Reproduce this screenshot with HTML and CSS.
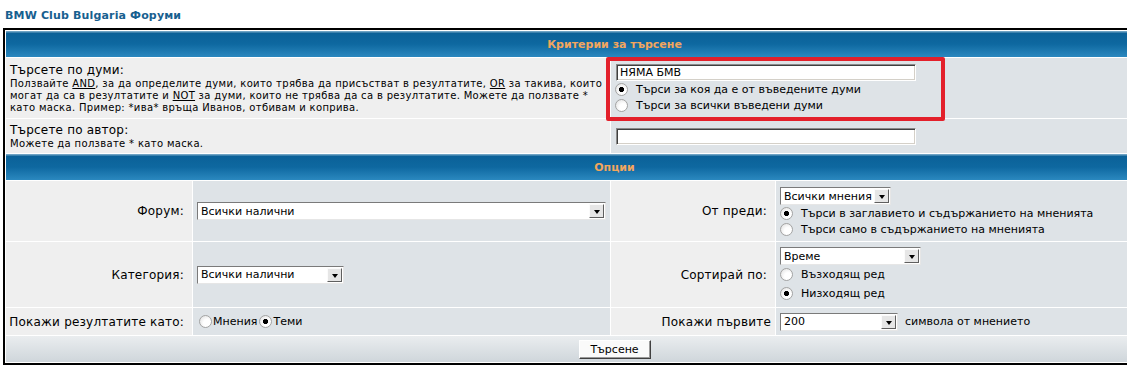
FILE: index.html
```html
<!DOCTYPE html>
<html lang="bg">
<head>
  <meta charset="UTF-8">
  <title>BMW Club Bulgaria Форуми - Търсене</title>
  <link rel="stylesheet" href="styles.css">
</head>
<body>
  <div class="site-title">BMW Club Bulgaria Форуми</div>

  <form class="search-form" action="#">
    <div class="forumline">
      <div class="th">Критерии за търсене</div>

      <div class="cell row1 span2 explain">
        <span class="gen">Търсете по думи:</span>
        <span class="gensmall">Ползвайте <u>AND</u>, за да определите думи, които трябва да присъстват в резултатите, <u>OR</u> за такива, които<br>могат да са в резултатите и <u>NOT</u> за думи, които не трябва да са в резултатите. Можете да ползвате *<br>като маска. Пример: *ива* връща Иванов, отбивам и коприва.</span>
      </div>
      <div class="cell row2 span2 stack top">
        <input type="text" class="post" name="search_keywords" value="НЯМА БМВ">
        <label class="opt"><input type="radio" name="search_terms" value="any" checked>Търси за коя да е от въведените думи</label>
        <label class="opt"><input type="radio" name="search_terms" value="all">Търси за всички въведени думи</label>
      </div>

      <div class="cell row1 span2 explain author">
        <span class="gen">Търсете по автор:</span>
        <span class="gensmall">Можете да ползвате * като маска.</span>
      </div>
      <div class="cell row2 span2 middle">
        <input type="text" class="post" name="search_author" value="">
      </div>

      <div class="th">Опции</div>

      <div class="cell row1 label">Форум:&nbsp;</div>
      <div class="cell row2 middle">
        <span class="dropdown w-forum"><select class="post" name="search_forum"><option>Всички налични</option></select></span>
      </div>
      <div class="cell row1 label">От преди:&nbsp;</div>
      <div class="cell row2 stack">
        <span class="dropdown w-time"><select class="post" name="search_time"><option>Всички мнения</option></select></span>
        <label class="opt"><input type="radio" name="search_fields" value="all" checked>Търси в заглавието и съдържанието на мненията</label>
        <label class="opt"><input type="radio" name="search_fields" value="msgonly">Търси само в съдържанието на мненията</label>
      </div>

      <div class="cell row1 label">Категория:&nbsp;</div>
      <div class="cell row2 middle">
        <span class="dropdown w-cat"><select class="post" name="search_cat"><option>Всички налични</option></select></span>
      </div>
      <div class="cell row1 label">Сортирай по:&nbsp;</div>
      <div class="cell row2 stack tall">
        <span class="dropdown w-sort"><select class="post" name="sort_by"><option>Време</option></select></span>
        <label class="opt"><input type="radio" name="sort_dir" value="ASC">Възходящ ред</label>
        <label class="opt"><input type="radio" name="sort_dir" value="DESC" checked>Низходящ ред</label>
      </div>

      <div class="cell row1 label">Покажи резултатите като:&nbsp;</div>
      <div class="cell row2 middle inline-opts">
        <input type="radio" name="show_results" value="posts"><span>Мнения</span><input type="radio" name="show_results" value="topics" checked><span>Теми</span>
      </div>
      <div class="cell row1 label">Покажи първите</div>
      <div class="cell row2 middle">
        <span class="dropdown w-chars"><select class="post" name="return_chars"><option>200</option></select></span>
        <span class="after-select">символа от мнението</span>
      </div>

      <div class="cat-bottom">
        <input type="submit" class="liteoption" value="Търсене">
      </div>
    </div>
  </form>

  <!-- annotation frame around the keyword box -->
  <div class="highlight"></div>
</body>
</html>
```

FILE: styles.css
```css
body {
  margin: 0;
  background: #fff;
  color: #000;
  font-family: "DejaVu Sans", Verdana, sans-serif;
  overflow: hidden;
}

.site-title {
  margin: 9px 0 0 5px;
  font-size: 11px;
  line-height: 14px;
  font-weight: bold;
  letter-spacing: 0.15px;
  color: #17608f;
}

.search-form {
  margin: 0;
}

.forumline {
  display: grid;
  grid-template-columns: 186px 417px 164px 447px;
  grid-template-rows: 26px 60px 34px 26px 60px 65px 27px 26px;
  gap: 1px;
  padding: 1px;
  width: max-content;
  margin: 5px 0 0 3px;
  border: 2px solid #000;
  background: #fff;
}

.th {
  grid-column: span 4;
  display: flex;
  align-items: center;
  justify-content: center;
  background: linear-gradient(#6ea3c4 0, #6ea3c4 1px, #0b6198 2px, #0e68a0 50%, #2b88bf 100%);
  color: #f2a65e;
  font-size: 11px;
  font-weight: bold;
}

.cell {
  padding: 4px;
  min-width: 0;
}
.row1 { background: #efefef; }
.row2 { background: #dee3e7; }
.span2 { grid-column: span 2; }

.gen {
  display: block;
  font-size: 12px;
  line-height: 15px;
  letter-spacing: 0.2px;
}
.gensmall {
  display: block;
  font-size: 10px;
  line-height: 12px;
  letter-spacing: 0.33px;
  white-space: nowrap;
}
.explain { padding-top: 5px; }
.explain.author { padding-top: 4px; }

.label {
  display: flex;
  align-items: center;
  justify-content: flex-end;
  font-size: 12px;
  letter-spacing: 0.2px;
  white-space: nowrap;
}

.middle {
  display: flex;
  align-items: center;
  font-size: 11px;
}

.stack {
  display: flex;
  flex-direction: column;
  justify-content: center;
  align-items: flex-start;
  padding-top: 6px;
  font-size: 11px;
}
.stack.top {
  justify-content: flex-start;
  padding-top: 6px;
}
.stack.tall {
  padding-top: 5px;
}
.stack.tall .opt { height: 19px; }

.opt {
  display: flex;
  align-items: center;
  height: 16px;
  white-space: nowrap;
}
.stack.top .opt { height: 17px; }

input.post {
  box-sizing: border-box;
  width: 300px;
  height: 17px;
  margin: 0 0 0 1px;
  padding: 0 3px;
  border: 1px solid;
  border-color: #8a8a8a #ffffff #ffffff #8a8a8a;
  box-shadow: inset 1px 1px 0 #404040, inset -1px -1px 0 #d4d0c8;
  background: #fff;
  font: 11px "DejaVu Sans", Verdana, sans-serif;
  color: #000;
  outline: none;
}

input[type="radio"] {
  appearance: none;
  -webkit-appearance: none;
  box-sizing: border-box;
  width: 13px;
  height: 13px;
  margin: 0 8px 0 0;
  border: 1px solid #a3a3a3;
  border-radius: 50%;
  background: radial-gradient(circle at 65% 65%, #ffffff 35%, #dcdcdc 100%);
  flex: none;
}
input[type="radio"]:checked {
  background: radial-gradient(circle, #000 0 2.3px, transparent 2.9px),
              radial-gradient(circle at 65% 65%, #ffffff 35%, #dcdcdc 100%);
}

.inline-opts input[type="radio"] {
  margin: 0 1px 0 2px;
}

.dropdown {
  position: relative;
  display: inline-block;
  height: 18px;
}
.dropdown select {
  appearance: none;
  -webkit-appearance: none;
  box-sizing: border-box;
  width: 100%;
  height: 18px;
  margin: 0;
  padding: 0 18px 0 3px;
  border: 1px solid;
  border-color: #7a7a7a #e6e6e6 #e6e6e6 #7a7a7a;
  border-radius: 0;
  background: #fff;
  font: 11px "DejaVu Sans", Verdana, sans-serif;
  color: #000;
}
/* the little dropdown button */
.dropdown::after {
  content: "";
  position: absolute;
  top: 2px;
  right: 2px;
  box-sizing: border-box;
  width: 15px;
  height: 14px;
  border: 1px solid;
  border-color: #fbfbfb #5f5f5f #5f5f5f #fbfbfb;
  background: #e6e6e6;
}
.dropdown::before {
  content: "";
  position: absolute;
  z-index: 1;
  top: 8px;
  right: 6px;
  border-left: 3.5px solid transparent;
  border-right: 3.5px solid transparent;
  border-top: 4px solid #000;
}
.w-forum { width: 409px; }
.w-time { width: 111px; }
.w-cat { width: 147px; }
.w-sort { width: 141px; }
.w-chars { width: 118px; }

.after-select {
  margin-left: 7px;
}

.cat-bottom {
  grid-column: span 4;
  display: flex;
  align-items: center;
  justify-content: center;
  background: linear-gradient(#eaedef, #cfd6db);
}

.liteoption {
  box-sizing: border-box;
  width: 72px;
  height: 19px;
  padding: 0;
  border: 1px solid;
  border-color: #ffffff #404040 #404040 #ffffff;
  box-shadow: inset -1px -1px 0 #9a9a9a;
  background: #fafafa;
  font: 11px "DejaVu Sans", Verdana, sans-serif;
  color: #000;
}

.highlight {
  position: absolute;
  left: 606px;
  top: 57px;
  width: 339px;
  height: 64px;
  box-sizing: border-box;
  border: 4px solid #e3202b;
  border-radius: 2px;
  pointer-events: none;
}
```
